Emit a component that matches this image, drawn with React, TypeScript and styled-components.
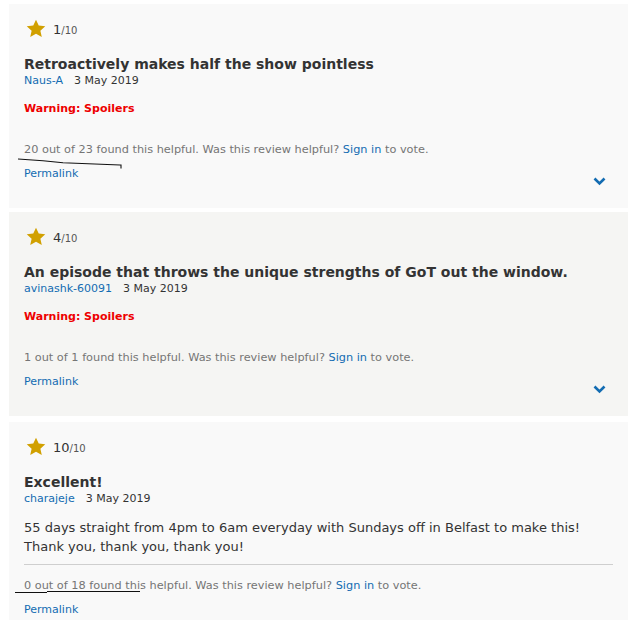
import React from "react";
import styled, { createGlobalStyle } from "styled-components";

const Global = createGlobalStyle`
  html, body { margin: 0; padding: 0; background: #fff; }
  body { font-family: "DejaVu Sans", Verdana, sans-serif; color: #333; }
`;

const List = styled.div`
  display: flex;
  flex-direction: column;
  gap: 4px;
  padding: 4px 3px 0 9px;
`;

const Card = styled.div<{ $shade?: boolean; $extraTop?: number }>`
  position: relative;
  background: ${(p) => (p.$shade ? "#f5f5f3" : "#f9f9f9")};
  padding: 14px 15px 12px 15px;
  min-height: 178px;
  margin-top: ${(p) => p.$extraTop ?? 0}px;
`;

const RatingRow = styled.div`
  display: flex;
  align-items: center;
  gap: 7px;
  height: 20px;
  padding-left: 2px;
`;

const Score = styled.span`
  font-size: 13px;
  color: #333;
`;

const OutOf = styled.span`
  font-size: 10px;
  color: #555;
`;

const Title = styled.div`
  margin-top: 17px;
  font-size: 14px;
  font-weight: bold;
  color: #333;
  line-height: 18px;
`;

const Meta = styled.div`
  font-size: 11px;
  line-height: 15px;
  color: #333;
  display: flex;
  gap: 11px;
`;

const Link = styled.a`
  color: #136cb2;
  text-decoration: none;
`;

const Warning = styled.div`
  margin-top: 13px;
  font-size: 11px;
  font-weight: bold;
  color: #e00;
  line-height: 15px;
`;

const Body = styled.div`
  margin-top: 12px;
  font-size: 13px;
  line-height: 19px;
  color: #333;
`;

const Divider = styled.hr`
  border: 0;
  border-top: 1px solid #cfcfcf;
  margin: 8px 0 0 0;
`;

const Helpful = styled.div<{ $top: number }>`
  margin-top: ${(p) => p.$top}px;
  font-size: 11.3px;
  line-height: 14px;
  color: #757575;
`;

const Permalink = styled.div`
  margin-top: 10px;
  font-size: 11px;
  line-height: 14px;
`;

const Chevron = styled.div`
  position: absolute;
  right: 22px;
  bottom: 22px;
  width: 13px;
  height: 9px;
  display: flex;
`;

const Scribble = styled.svg`
  position: absolute;
  pointer-events: none;
`;

const Star = () => (
  <svg width="20" height="19" viewBox="0 0 24 23">
    <path
      d="M12 0.8l3.3 7.2 7.9 0.8-5.9 5.3 1.7 7.8L12 17.9l-7 4 1.7-7.8L0.8 8.8l7.9-0.8z"
      fill="#d1a000"
    />
  </svg>
);

const ChevronIcon = () => (
  <Chevron>
    <svg width="13" height="9" viewBox="0 0 13 9">
      <path d="M1.5 1.5l5 5 5-5" fill="none" stroke="#136cb2" strokeWidth="2.6" />
    </svg>
  </Chevron>
);

type Review = {
  score: string;
  title: string;
  author: string;
  date: string;
  spoiler?: boolean;
  body?: string[];
  helpful: string;
  shade?: boolean;
};

const reviews: Review[] = [
  {
    score: "1",
    title: "Retroactively makes half the show pointless",
    author: "Naus-A",
    date: "3 May 2019",
    spoiler: true,
    helpful: "20 out of 23 found this helpful.",
  },
  {
    score: "4",
    title: "An episode that throws the unique strengths of GoT out the window.",
    author: "avinashk-60091",
    date: "3 May 2019",
    spoiler: true,
    helpful: "1 out of 1 found this helpful.",
    shade: true,
  },
  {
    score: "10",
    title: "Excellent!",
    author: "charajeje",
    date: "3 May 2019",
    body: [
      "55 days straight from 4pm to 6am everyday with Sundays off in Belfast to make this!",
      "Thank you, thank you, thank you!",
    ],
    helpful: "0 out of 18 found this helpful.",
  },
];

const ReviewCard = ({ r, index }: { r: Review; index: number }) => (
  <Card $shade={r.shade} $extraTop={index === 2 ? 2 : 0}>
    <RatingRow>
      <Star />
      <span>
        <Score>{r.score}</Score>
        <OutOf>/10</OutOf>
      </span>
    </RatingRow>
    <Title>{r.title}</Title>
    <Meta>
      <Link>{r.author}</Link>
      <span>{r.date}</span>
    </Meta>
    {r.spoiler && <Warning>Warning: Spoilers</Warning>}
    {r.body && (
      <>
        <Body>
          {r.body.map((l) => (
            <div key={l}>{l}</div>
          ))}
        </Body>
        <Divider />
      </>
    )}
    <Helpful $top={r.body ? 14 : 27}>
      {r.helpful} Was this review helpful? <Link>Sign in</Link> to vote.
    </Helpful>
    <Permalink>
      <Link>Permalink</Link>
    </Permalink>
    {!r.body && <ChevronIcon />}
    {index === 0 && (
      <Scribble
        style={{ left: 9, top: 154 }}
        width="108"
        height="12"
        viewBox="0 0 108 12"
      >
        <path
          d="M0 1 L25 2.7 L45 4.7 L102 7 L103 7 L103 10.5"
          fill="none"
          stroke="#111"
          strokeWidth="1.1"
        />
      </Scribble>
    )}
    {index === 2 && (
      <Scribble
        style={{ left: 6, top: 168 }}
        width="128"
        height="4"
        viewBox="0 0 128 4"
      >
        <path d="M0 2.5 L32 2.5 M32 1.5 L125 1.5" fill="none" stroke="#111" strokeWidth="1.1" />
      </Scribble>
    )}
  </Card>
);

export default function App() {
  return (
    <>
      <Global />
      <List>
        {reviews.map((r, i) => (
          <ReviewCard key={i} r={r} index={i} />
        ))}
      </List>
    </>
  );
}
